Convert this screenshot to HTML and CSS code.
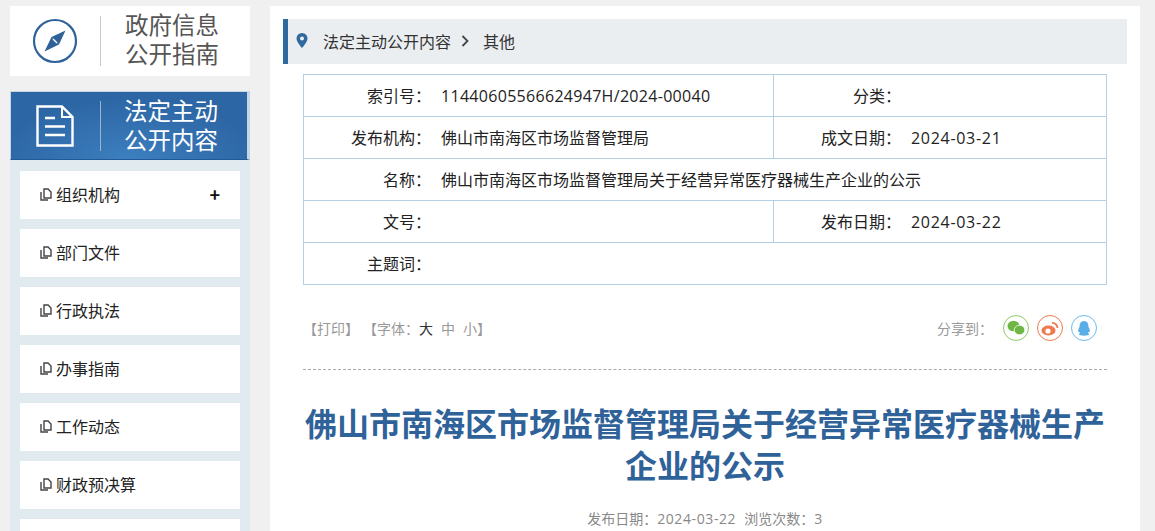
FILE: index.html
```html
<!DOCTYPE html>
<html lang="zh">
<head>
<meta charset="utf-8">
<title>法定主动公开内容</title>
<link rel="stylesheet" href="styles.css">
</head>
<body>
<div class="page">
  <aside class="side">
    <div class="brand">
      <svg class="compass" viewBox="0 0 46 46" width="46" height="46"><circle cx="23" cy="23" r="21" fill="none" stroke="#2f6299" stroke-width="2.200"/><path d="M33.500 12.500 L27 26.500 L19.500 19 Z" fill="#2f6299"/><path d="M12.500 33.500 L19.500 19 L27 26.500 Z" fill="#2f6299"/><path d="M21 21 L25 25" stroke="#fff" stroke-width="1.200"/></svg>
      <span class="vline"></span>
      <div class="brand-text">政府信息<br>公开指南</div>
    </div>
    <div class="head">
      <svg class="doc" viewBox="0 0 38 42" width="38" height="42"><path d="M1.500 1.500 H26 L36.500 12 V40.500 H1.500 Z" fill="none" stroke="#fff" stroke-width="2.400"/><path d="M26 1.500 V12 H36.500" fill="none" stroke="#fff" stroke-width="2"/><path d="M9 13 H19 M9 21.500 H29 M9 30 H29" stroke="#fff" stroke-width="2.400"/></svg>
      <span class="vline light"></span>
      <div class="head-text">法定主动<br>公开内容</div>
    </div>
    <ul class="menu">
      <li><svg class="ico" viewBox="0 0 12 13" width="12" height="13"><path d="M4 1 H8 L11 4 V10 H4 Z M1 4 V12 H8" fill="none" stroke="#444" stroke-width="1.400"/></svg>组织机构<b class="plus">+</b></li>
      <li><svg class="ico" viewBox="0 0 12 13" width="12" height="13"><path d="M4 1 H8 L11 4 V10 H4 Z M1 4 V12 H8" fill="none" stroke="#444" stroke-width="1.400"/></svg>部门文件</li>
      <li><svg class="ico" viewBox="0 0 12 13" width="12" height="13"><path d="M4 1 H8 L11 4 V10 H4 Z M1 4 V12 H8" fill="none" stroke="#444" stroke-width="1.400"/></svg>行政执法</li>
      <li><svg class="ico" viewBox="0 0 12 13" width="12" height="13"><path d="M4 1 H8 L11 4 V10 H4 Z M1 4 V12 H8" fill="none" stroke="#444" stroke-width="1.400"/></svg>办事指南</li>
      <li><svg class="ico" viewBox="0 0 12 13" width="12" height="13"><path d="M4 1 H8 L11 4 V10 H4 Z M1 4 V12 H8" fill="none" stroke="#444" stroke-width="1.400"/></svg>工作动态</li>
      <li><svg class="ico" viewBox="0 0 12 13" width="12" height="13"><path d="M4 1 H8 L11 4 V10 H4 Z M1 4 V12 H8" fill="none" stroke="#444" stroke-width="1.400"/></svg>财政预决算</li>
      <li></li>
    </ul>
  </aside>
  <main class="main">
    <div class="crumb">
      <svg class="pin" viewBox="0 0 12 15" width="12" height="15"><path fill-rule="evenodd" d="M6 0 A5.500 5.500 0 0 1 11.500 5.500 C11.500 9 6 15 6 15 C6 15 .5 9 .5 5.500 A5.500 5.500 0 0 1 6 0 Z M6 3.500 A2 2 0 1 0 6 7.500 A2 2 0 1 0 6 3.500 Z" fill="#2f6a9f"/></svg>
      <span>法定主动公开内容</span>
      <svg class="chev" viewBox="0 0 8 12" width="8" height="12"><path d="M1.500 1 L6.500 6 L1.500 11" fill="none" stroke="#444" stroke-width="1.800"/></svg>
      <span>其他</span>
    </div>
    <div class="meta">
      <div class="row"><div class="k w1">索引号：</div><div class="v w2 br num long">11440605566624947H/2024-00040</div><div class="k w3">分类：</div><div class="v"></div></div>
      <div class="row"><div class="k w1">发布机构：</div><div class="v w2 br">佛山市南海区市场监督管理局</div><div class="k w3">成文日期：</div><div class="v num">2024-03-21</div></div>
      <div class="row"><div class="k w1">名称：</div><div class="v">佛山市南海区市场监督管理局关于经营异常医疗器械生产企业的公示</div></div>
      <div class="row"><div class="k w1">文号：</div><div class="v w2 br"></div><div class="k w3">发布日期：</div><div class="v num">2024-03-22</div></div>
      <div class="row"><div class="k w1">主题词：</div><div class="v"></div></div>
    </div>
    <div class="tools">
      <div class="opts">【打印】<span class="gap"></span>【字体：<span class="dark">大</span><span class="sp">中</span><span class="sp">小</span>】</div>
      <div class="share">
        <span class="share-label">分享到：</span>
        <span class="sh wx"><svg viewBox="0 0 18 16" width="18" height="16"><ellipse cx="6.500" cy="6" rx="6" ry="5.200" fill="#6fb644"/><ellipse cx="12.500" cy="10" rx="5.300" ry="4.800" fill="#6fb644" stroke="#fff" stroke-width=".8"/></svg></span>
        <span class="sh wb"><svg viewBox="0 0 18 16" width="18" height="16"><ellipse cx="7.500" cy="10.500" rx="7" ry="5" fill="#ef7a4f"/><circle cx="7" cy="11" r="2.600" fill="#fff"/><path d="M11 3 A5 5 0 0 1 16.500 8" fill="none" stroke="#ef7a4f" stroke-width="1.800"/></svg></span>
        <span class="sh qq"><svg viewBox="0 0 16 17" width="16" height="17"><path d="M8 1 C12 1 12.500 5 12.500 7 C14 9.500 14.500 12 13 12.500 L12 11.500 C12 13 13 14 13 14.500 C13 16 3 16 3 14.500 C3 14 4 13 4 11.500 L3 12.500 C1.500 12 2 9.500 3.500 7 C3.500 5 4 1 8 1 Z" fill="#5aaee8"/></svg></span>
      </div>
    </div>
    <div class="rule"></div>
    <h1 class="title">佛山市南海区市场监督管理局关于经营异常医疗器械生产企业的公示</h1>
    <div class="info">发布日期：<span class="num2">2024-03-22</span><span class="gap2"></span>浏览次数：<span class="num2">3</span></div>
  </main>
</div>
</body>
</html>
```
FILE: styles.css
```css
html,body{margin:0;padding:0;height:531px;overflow:hidden}
body{background:#f0f0f0;font-family:"Noto Sans CJK SC",sans-serif;color:#222}
.page{display:flex;align-items:flex-start;height:531px;overflow:hidden}
.side{width:240px;margin:6px 20px 0 10px;flex:none}
.brand{height:70px;background:#fff;display:flex;align-items:center;padding-left:22px;box-sizing:border-box}
.vline{width:1px;height:50px;background:#c9c9c9;margin:0 24px 0 22px}
.vline.light{background:#9ab4cc}
.brand-text,.head-text{font-size:23.500px;line-height:29px;text-align:left;position:relative;top:-2px}
.head-text{top:-1px}
.brand-text{color:#555}
.head{margin-top:15px;height:69px;background:radial-gradient(ellipse 130px 60px at 50% 100%,#3c7fbf,#2d66a5);border:1px solid #c5d5e3;border-right-width:3px;border-bottom-color:#1f5a96;display:flex;align-items:center;padding-left:25px;box-sizing:border-box;color:#fff}
.head .vline{margin:0 23px 0 26px}
.menu{list-style:none;margin:0;padding:11px 10px 40px;background:#e0eaef}
.menu li{height:48px;background:#fff;margin-bottom:10px;display:flex;align-items:center;padding:0 0 2px 20px;box-sizing:border-box;font-size:16px;color:#222;position:relative;line-height:46px}
.ico{margin-right:4px}
.plus{position:absolute;right:20px;font-size:18px;font-weight:700;color:#111}
.main{width:870px;background:#fff;height:525px;margin-top:6px;box-sizing:border-box;padding:13px 0 0 13px;flex:none;overflow:hidden}
.crumb{width:844px;height:45px;background:#ebeef1;border-left:5px solid #2f6a9f;box-sizing:border-box;display:flex;align-items:center;padding:0 0 2px 8px;font-size:16px;color:#333}
.pin{margin-right:15px}
.chev{margin:0 14px 0 10px}
.meta{margin:10px 0 0 20px;width:804px;border:1px solid #b3d0e4;border-bottom:0;box-sizing:border-box}
.row{display:flex;height:42px;border-bottom:1px solid #b3d0e4;box-sizing:border-box;font-size:16px;line-height:41px}
.k{text-align:right;flex:none}
.w1{width:127px}
.w2{width:343px;flex:none}
.w3{width:127px}
.v{padding-left:10px}
.num{font-family:"Open Sans","Noto Sans CJK SC",sans-serif;letter-spacing:.7px;line-height:43px}
.num.long{letter-spacing:.3px}
.w2.br{border-right:1px solid #b3d0e4;box-sizing:border-box}
.tools{display:flex;justify-content:space-between;align-items:center;margin:29px 0 0 20px;height:28px;font-size:14px;color:#999;width:794px}
.opts{line-height:28px}
.gap{display:inline-block;width:4px}
.dark{color:#333}
.sp{margin-left:8px}
.share{display:flex;align-items:center;gap:8px}
.share-label{margin-right:2px}
.sh{width:26px;height:26px;box-sizing:border-box;border-radius:50%;border:1px solid;display:flex;align-items:center;justify-content:center;background:#fff}
.wx{border-color:#8ecb62}.wb{border-color:#ef7a4f}.qq{border-color:#6dbbee}
.rule{margin:27px 0 0 20px;width:804px;border-top:1px dashed #aaa}
.title{margin:31px 0 0 20px;width:804px;font-size:32px;line-height:42px;font-weight:700;color:#2f6299;text-align:center}
.info{margin:23px 0 0 20px;width:804px;text-align:center;font-size:14px;color:#888}
.num2{font-family:"Open Sans","Noto Sans CJK SC",sans-serif;letter-spacing:.6px}
.gap2{display:inline-block;width:8px}
```
